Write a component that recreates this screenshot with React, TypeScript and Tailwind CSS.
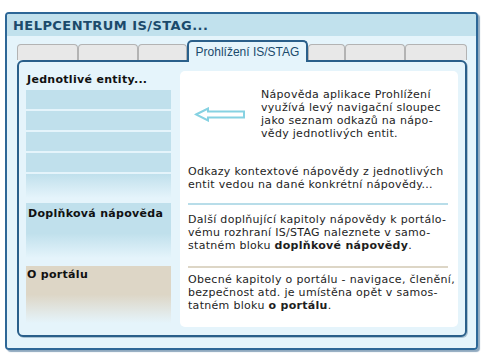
import React from "react";

const inactiveTab =
  "h-[16px] border border-b-0 border-[#b3b3b3] bg-[#e8e8e8] rounded-t-[4px]";

export default function App() {
  return (
    <div className="w-[485px] h-[363px] bg-white pt-[12px] pl-[5px] font-['DejaVu_Sans',Verdana,sans-serif]">
      <div className="w-[473px] h-[338px] flex flex-col border-2 border-[#2d6797] rounded-[4px] shadow-[2px_2px_1px_#8fa9bf] overflow-hidden">
        {/* titulek */}
        <div className="h-[22px] bg-[#c1e1ed] pl-[6px] flex items-center">
          <span className="text-[13px] font-bold tracking-[0.45px] text-[#1b4a6b] leading-none">
            HELPCENTRUM IS/STAG...
          </span>
        </div>

        {/* tělo */}
        <div className="flex-1 bg-[#e5f4fb] pt-[4px] pl-[10px]">
          {/* záložky */}
          <div className="flex items-end h-[20px] w-[450px]">
            <div className={`${inactiveTab} w-[61px]`} />
            <div className={`${inactiveTab} w-[60px]`} />
            <div className={`${inactiveTab} w-[49px]`} />
            <div className="relative z-10 -mb-[2px] h-[22px] w-[121px] border-2 border-b-0 border-[#2a5f8a] bg-[#e5f4fb] rounded-t-[5px] flex items-center justify-center">
              <span className="font-['Liberation_Sans',Tahoma,sans-serif] text-[12px] text-[#1b4a6b] leading-none -mt-[1px]">
                Prohlížení IS/STAG
              </span>
            </div>
            <div className={`${inactiveTab} w-[37px]`} />
            <div className={`${inactiveTab} w-[60px]`} />
            <div className={`${inactiveTab} w-[62px]`} />
          </div>

          {/* panel */}
          <div className="w-[450px] h-[277px] border-2 border-[#2a5f8a] rounded-[6px] bg-[#e5f4fb] shadow-[1px_1px_0_#a9c3d3] px-[7px] pt-[9px] pb-[8px] flex gap-[9px]">
            {/* levý sloupec */}
            <div className="w-[145px] flex flex-col text-[11px] font-bold tracking-[0.3px] text-[#111]">
              <div className="h-[19px] pt-[2px] pl-[1px] leading-[14px]">Jednotlivé entity...</div>
              <div className="h-[19px] mb-[2px] bg-[#c0e0ec]" />
              <div className="h-[19px] mb-[2px] bg-[#c0e0ec]" />
              <div className="h-[19px] mb-[2px] bg-[#c0e0ec]" />
              <div className="h-[19px] mb-[2px] bg-[#c0e0ec]" />
              <div className="h-[24px] bg-gradient-to-b from-[#c0e0ec] to-[#e5f4fb]" />
              <div className="mt-[5px] h-[55px] pt-[4px] pl-[2px] leading-[14px] bg-[linear-gradient(to_bottom,#c0e0ec_55%,#e5f4fb_100%)]">
                Doplňková nápověda
              </div>
              <div className="mt-[8px] h-[57px] pt-[2px] pl-[1px] leading-[14px] bg-[linear-gradient(to_bottom,#ddd6c6_50%,#e5f4fb_100%)]">
                O portálu
              </div>
            </div>

            {/* pravý panel */}
            <div className="w-[278px] h-full bg-white rounded-[5px] flex flex-col text-[11px] leading-[13px] tracking-[0.3px] text-[#1e1e1e] whitespace-nowrap">
              <div className="mt-[17px] flex items-center">
                <svg
                  viewBox="0 0 52 15"
                  className="ml-[14px] w-[52px] h-[15px]"
                  fill="#ffffff"
                  stroke="#86d2e2"
                  strokeWidth="2"
                  strokeLinejoin="miter"
                >
                  <path d="M2 7.5 L14 1.5 L14 4.5 L50 4.5 L50 10.5 L14 10.5 L14 13.5 Z" />
                </svg>
                <div className="ml-[15px]">
                  Nápověda aplikace Prohlížení
                  <br />
                  využívá levý navigační sloupec
                  <br />
                  jako seznam odkazů na nápo-
                  <br />
                  vědy jednotlivých entit.
                </div>
              </div>

              <div className="mt-[25px] pl-[8px]">
                Odkazy kontextové nápovědy z jednotlivých
                <br />
                entit vedou na dané konkrétní nápovědy...
              </div>

              <div className="mt-[12px] ml-[8px] w-[260px] h-[2px] bg-[#b8dde9]" />

              <div className="mt-[8px] pl-[8px]">
                Další doplňující kapitoly nápovědy k portálo-
                <br />
                vému rozhraní IS/STAG naleznete v samo-
                <br />
                statném bloku <b>doplňkové nápovědy</b>.
              </div>

              <div className="mt-[14px] ml-[8px] w-[260px] h-[2px] bg-[#ddd6c6]" />

              <div className="mt-[5px] pl-[8px]">
                Obecné kapitoly o portálu - navigace, členění,
                <br />
                bezpečnost atd. je umístěna opět v samos-
                <br />
                tatném bloku <b>o portálu</b>.
              </div>
            </div>
          </div>
        </div>
      </div>
    </div>
  );
}
